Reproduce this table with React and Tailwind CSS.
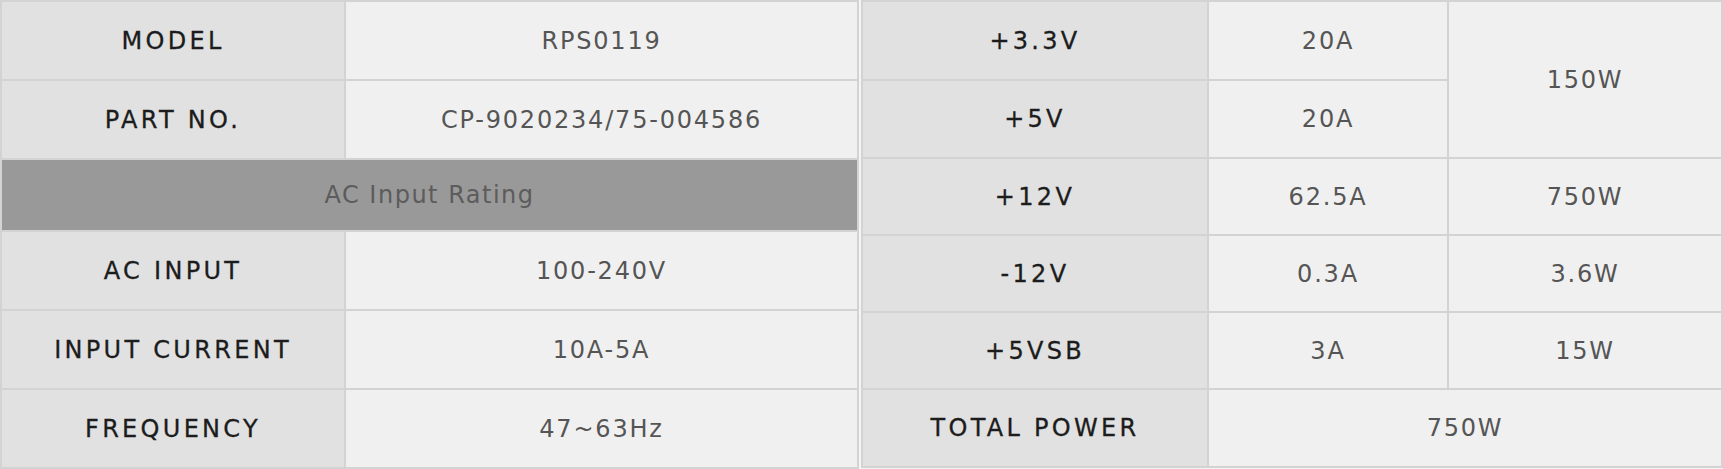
import React from "react";

const font = { fontFamily: '"DejaVu Sans", sans-serif' };

const Label = ({ children, className = "" }) => (
  <div
    className={`flex items-center justify-center bg-[#e1e1e1] text-[24px] tracking-[3.3px] text-[#1c1c1c] [-webkit-text-stroke:0.3px_#1c1c1c] ${className}`}
  >
    {children}
  </div>
);

const Value = ({ children, className = "" }) => (
  <div
    className={`flex items-center justify-center bg-[#f0f0f0] text-[24px] tracking-[1.8px] text-[#555] ${className}`}
  >
    {children}
  </div>
);

const rails = [
  { v: "+3.3V", a: "20A" },
  { v: "+5V", a: "20A" },
  { v: "+12V", a: "62.5A", w: "750W" },
  { v: "-12V", a: "0.3A", w: "3.6W" },
  { v: "+5VSB", a: "3A", w: "15W" },
];

export default function App() {
  return (
    <div className="flex gap-[2px] bg-[#f4f4f4]" style={font}>
      {/* input side */}
      <div className="grid w-[859px] shrink-0 grid-cols-[342px_511px] grid-rows-[77px_77px_70px_77px_77px_77px_77px] gap-[2px] bg-[#d3d3d3] p-[2px]">
        <Label>MODEL</Label>
        <Value>RPS0119</Value>
        <Label>PART NO.</Label>
        <Value>CP-9020234/75-004586</Value>
        <div className="col-span-2 flex items-center justify-center bg-[#999999] text-[24px] tracking-[1.5px] text-[#5c5c5c]">
          AC Input Rating
        </div>
        <Label>AC INPUT</Label>
        <Value>100-240V</Value>
        <Label>INPUT CURRENT</Label>
        <Value>10A-5A</Value>
        <Label>FREQUENCY</Label>
        <Value>47~63Hz</Value>
        <Label />
        <div className="grid grid-cols-[237px_1fr] gap-[2px]">
          <Value />
          <Value />
        </div>
      </div>

      {/* output side */}
      <div className="grid w-[862px] shrink-0 grid-cols-[344px_238px_272px] grid-rows-[77px_76px_75px_75px_75px_76px] gap-[2px] self-start bg-[#d3d3d3] p-[2px]">
        {rails.map((r, i) => (
          <React.Fragment key={r.v}>
            <Label>{r.v}</Label>
            <Value>{r.a}</Value>
            {i === 0 && <Value className="row-span-2">150W</Value>}
            {r.w && <Value>{r.w}</Value>}
          </React.Fragment>
        ))}
        <Label>TOTAL POWER</Label>
        <Value className="col-span-2">750W</Value>
      </div>
    </div>
  );
}
